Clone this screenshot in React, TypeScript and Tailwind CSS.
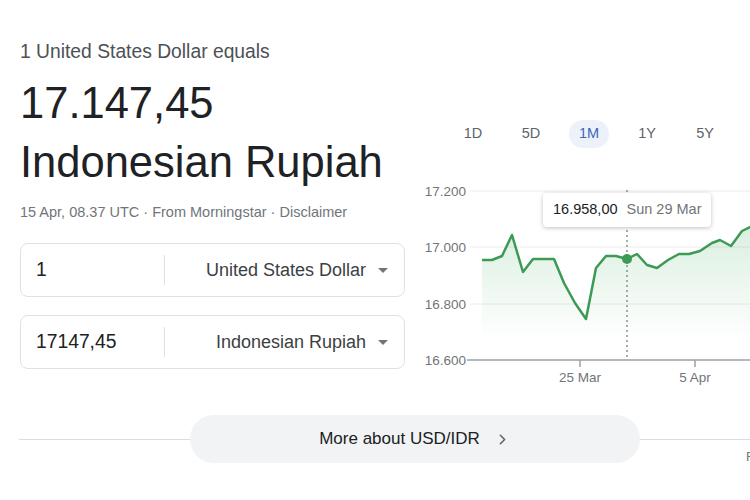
import { ChevronRight } from 'lucide-react';

const POINTS: [number, number][] = [
  [482, 260], [492, 260], [502, 256], [512, 235], [523, 272], [533, 259], [554, 259],
  [564, 283], [575, 303], [586, 319], [596, 268], [606, 256], [616, 256], [627, 259],
  [637, 254], [647, 265], [657, 268], [668, 260], [679, 254], [689, 254], [700, 251],
  [712, 243], [720, 240], [731, 246], [742, 231], [750, 227], [762, 222],
];

const RANGES = ['1D', '5D', '1M', '1Y', '5Y', 'Max'];

function CurrencyBox({ amount, currency }: { amount: string; currency: string }) {
  return (
    <div className="flex items-center h-[54px] border border-[#dfe1e5] rounded-lg">
      <div className="w-[143px] pl-[15px] text-[19.3px] text-[#202124]">{amount}</div>
      <div className="w-px h-[30px] bg-[#dfe1e5]" />
      <div className="flex-1 flex items-center justify-end pr-[16px] text-[18px] text-[#3c4043]">
        <span>{currency}</span>
        <svg width="10" height="5" viewBox="0 0 10 5" className="ml-[12px]">
          <path d="M0 0 L10 0 L5 5 Z" fill="#70757a" />
        </svg>
      </div>
    </div>
  );
}

function Chart() {
  const line = POINTS.map(([x, y], i) => `${i ? 'L' : 'M'}${x} ${y}`).join(' ');
  const area = `${line} L762 360 L482 360 Z`;
  return (
    <div className="relative mt-[32px] h-[210px]">
      <svg width="340" height="210" viewBox="420 180 340 210" className="block">
        <defs>
          <linearGradient id="area" x1="0" y1="215" x2="0" y2="340" gradientUnits="userSpaceOnUse">
            <stop offset="0" stopColor="#34a853" stopOpacity="0.2" />
            <stop offset="1" stopColor="#34a853" stopOpacity="0" />
          </linearGradient>
        </defs>
        {[191, 247, 304].map((y) => (
          <line key={y} x1="470" x2="760" y1={y} y2={y} stroke="#ececec" strokeWidth="1" />
        ))}
        <path d={area} fill="url(#area)" />
        <line x1="467" x2="760" y1="360" y2="360" stroke="#9aa0a6" strokeWidth="1.5" />
        <g fontSize="13.5" fill="#70757a" textAnchor="end">
          <text x="466" y="196">17.200</text>
          <text x="466" y="252">17.000</text>
          <text x="466" y="309">16.800</text>
          <text x="466" y="365">16.600</text>
        </g>
        <g stroke="#9aa0a6" strokeWidth="1.5">
          <line x1="580" x2="580" y1="360" y2="367" />
          <line x1="695" x2="695" y1="360" y2="367" />
        </g>
        <g fontSize="13.5" fill="#70757a" textAnchor="middle">
          <text x="580" y="382">25 Mar</text>
          <text x="695" y="382">5 Apr</text>
        </g>
        <line x1="627" x2="627" y1="190" y2="360" stroke="#70757a" strokeWidth="1.2" strokeDasharray="2 3" />
        <path d={line} fill="none" stroke="#3c9a55" strokeWidth="2.5" strokeLinejoin="round" />
        <circle cx="627" cy="259" r="5" fill="#3c9a55" />
      </svg>
      {/* Hover tooltip */}
      <div className="absolute left-[123px] top-[13px] w-[168px] h-[34px] flex items-center gap-[9px] px-[10px] whitespace-nowrap bg-white rounded-sm shadow-[0_1px_4px_rgba(0,0,0,0.25)] text-[14.5px]">
        <span className="text-[#202124]">16.958,00</span>
        <span className="text-[#70757a]">Sun 29 Mar</span>
      </div>
    </div>
  );
}

export default function App() {
  return (
    <div className="w-[750px] h-[500px] overflow-hidden bg-white font-['Liberation_Sans',Arial,sans-serif]">
      <div className="w-[920px]">
        <div className="flex">
          {/* Converter */}
          <div className="ml-[20px] w-[385px] pt-[40px]">
            <div className="text-[19.3px] leading-[24px] text-[#4d5156]">1 United States Dollar equals</div>
            <div className="mt-[10px] text-[43.5px] leading-[59px] text-[#202124]">
              <div>17.147,45</div>
              <div>Indonesian Rupiah</div>
            </div>
            <div className="mt-[10px] text-[14.5px] leading-[20px] text-[#70757a]">
              15 Apr, 08.37 UTC · From Morningstar · Disclaimer
            </div>
            <div className="mt-[21px] flex flex-col gap-[18px]">
              <CurrencyBox amount="1" currency="United States Dollar" />
              <CurrencyBox amount="17147,45" currency="Indonesian Rupiah" />
            </div>
          </div>

          {/* Chart */}
          <div className="ml-[15px] w-[500px] pt-[120px]">
            <div className="flex pl-[24px]">
              {RANGES.map((r) => (
                <div key={r} className="w-[58px] flex justify-center">
                  <span
                    className={
                      r === '1M'
                        ? 'h-[28px] px-[10px] flex items-center rounded-full bg-[#edf2fa] text-[14.5px] text-[#3b66b8]'
                        : 'h-[28px] px-[10px] flex items-center text-[14.5px] text-[#5f6368]'
                    }
                  >
                    {r}
                  </span>
                </div>
              ))}
            </div>
            <Chart />
          </div>
        </div>

        {/* More about */}
        <div className="mt-[25px] ml-[19px] flex">
          <div className="w-[171px] h-[48px] flex items-center">
            <div className="w-full h-px bg-[#dadce0]" />
          </div>
          <div className="w-[450px] h-[48px] rounded-full bg-[#f1f3f4] flex items-center justify-center gap-[14px] text-[17px] text-[#202124]">
            <span>More about USD/IDR</span>
            <ChevronRight className="w-[17px] h-[17px] text-[#5f6368]" strokeWidth={2.25} />
          </div>
          <div className="flex-1 pt-[24px]">
            <div className="h-px bg-[#dadce0]" />
            <div className="mt-[7px] pl-[106px] text-[13px] text-[#70757a]">Feedback</div>
          </div>
        </div>
      </div>
    </div>
  );
}
